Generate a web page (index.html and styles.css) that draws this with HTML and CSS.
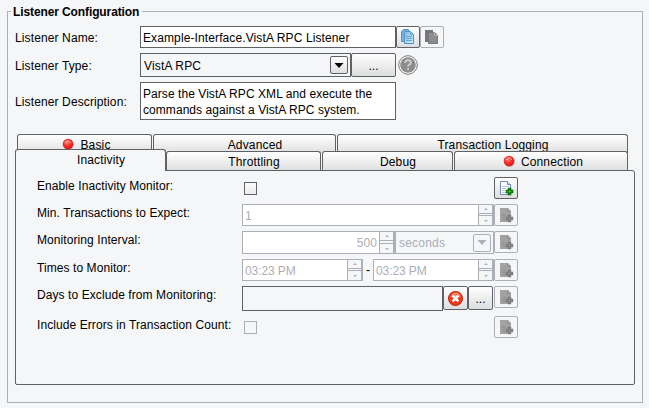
FILE: index.html
```
<!DOCTYPE html>
<html lang="en">
<head>
    <meta charset="UTF-8">
    <title>Listener Configuration</title>
    <link rel="stylesheet" href="styles.css">
</head>
<body>
    <!-- Shared icons -->
    <svg class="defs" width="0" height="0">
        <defs>
            <linearGradient id="blue" x1="0" y1="0" x2="1" y2="1">
                <stop offset="0" stop-color="#7db9e4"/>
                <stop offset="1" stop-color="#d5ecfb"/>
            </linearGradient>
            <radialGradient id="red" cx=".4" cy=".35" r=".65">
                <stop offset="0" stop-color="#ff8a80"/>
                <stop offset=".5" stop-color="#f8332c"/>
                <stop offset="1" stop-color="#d81a1a"/>
            </radialGradient>
        </defs>
        <symbol id="dot" viewBox="0 0 12 12">
            <circle cx="6.6" cy="6.8" r="5.2" fill="#b9bcbe"/>
            <circle cx="6" cy="6" r="5.3" fill="url(#red)"/>
            <path d="M3 5Q6 1 9 5" fill="none" stroke="#ffb0a8"/>
        </symbol>
        <symbol id="page-add" viewBox="0 0 16 16">
            <path d="M2.5 1.5h7l3 3v10h-10z" fill="#fff" stroke="#7186bd"/>
            <path d="M9.5 1.5v3h3" fill="#dce6f5" stroke="#7186bd"/>
            <path d="M4 6.5h7M4 8.5h4M4 10.5h3M4 12.5h4" stroke="#b8c6e0"/>
            <path d="M10.500 8.500h2v2h2v2h-2v2h-2v-2h-2v-2h2z" fill="#5cf03a" stroke="#0c7608" stroke-width="1.6"/>
        </symbol>
        <symbol id="page-add-off" viewBox="0 0 16 16">
            <path d="M2 1h8l3 3v11h-11z" fill="#a2a2a2"/>
            <path d="M9.5 1.5v3h3M4 8.5h4M4 10.5h3M4 12.5h4" fill="none" stroke="#909090"/>
            <path d="M10.5 8.5h2v2h2v2h-2v2h-2v-2h-2v-2h2z" fill="#939393" stroke="#7c7c7c" stroke-width="1.4"/>
        </symbol>
    </svg>

    <fieldset class="config">
        <legend>Listener Configuration</legend>

        <div class="field name-row">
            <span class="label">Listener Name:</span>
            <div class="box name-input">Example-Interface.VistA RPC Listener</div>
            <div class="btn icon-btn">
                <svg width="16" height="16" viewBox="0 0 16 16">
                    <path d="M1.5 2.5l2-2h5v12h-7z" fill="#77b2df" stroke="#5193c8"/>
                    <path d="M4.5 2.5h6l3 3v9h-9z" fill="url(#blue)" stroke="#5193c8"/>
                    <path d="M10.5 2.5v3h3M6 7.5h6M6 9.5h6M6 11.500h6" fill="none" stroke="#67a5d3"/>
                </svg>
            </div>
            <div class="btn icon-btn off">
                <svg width="16" height="16" viewBox="0 0 16 16">
                    <path d="M1 1h8v12h-8z" fill="#777"/>
                    <path d="M4.5 3.5h6l3 3v8h-9z" fill="#8d8d8d" stroke="#777"/>
                    <path d="M10.5 3.5v3h3" fill="none" stroke="#bbb"/>
                </svg>
            </div>
        </div>

        <div class="field type-row">
            <span class="label">Listener Type:</span>
            <div class="box combo type-combo">
                <span>VistA RPC</span>
                <div class="arrow"><svg width="10" height="5"><path d="M0.5 0h9l-4.5 5z"/></svg></div>
            </div>
            <div class="btn more-btn">...</div>
            <svg class="help" width="20" height="20" viewBox="0 0 20 20">
                <circle cx="10" cy="10" r="9.3" fill="#fff" stroke="#777"/>
                <circle cx="10" cy="10" r="7.8" fill="#8c8c8c"/>
                <path d="M7.2 8Q7.2 5.3 10 5.3T12.8 7.7Q12.8 9 11.2 9.7Q10.1 10.3 10.1 11.8M10.1 13v2" fill="none" stroke="#ccc" stroke-width="1.9"/>
            </svg>
        </div>

        <div class="field desc-row">
            <span class="label">Listener Description:</span>
            <div class="box desc-input">Parse the VistA RPC XML and execute the<br>commands against a VistA RPC system.</div>
        </div>

        <div class="tabs">
            <div class="tab-row back">
                <div class="tab basic marked"><svg class="dot" width="12" height="12"><use href="#dot"/></svg>Basic</div>
                <div class="tab advanced">Advanced</div>
                <div class="tab logging">Transaction Logging</div>
            </div>
            <div class="tab-row front">
                <div class="tab inactivity active">Inactivity</div>
                <div class="tab throttling">Throttling</div>
                <div class="tab debug">Debug</div>
                <div class="tab connection marked"><svg class="dot" width="12" height="12"><use href="#dot"/></svg>Connection</div>
            </div>
        </div>

        <div class="panel">
            <div class="row">
                <span class="label">Enable Inactivity Monitor:</span>
                <div class="controls"><div class="check"></div></div>
                <div class="btn icon-btn"><svg width="16" height="16"><use href="#page-add"/></svg></div>
            </div>
            <div class="row">
                <span class="label">Min. Transactions to Expect:</span>
                <div class="controls">
                    <div class="spinner wide"><span>1</span><div class="steps"><i class="up"></i><i class="down"></i></div></div>
                </div>
                <div class="btn icon-btn off"><svg width="16" height="16"><use href="#page-add-off"/></svg></div>
            </div>
            <div class="row interval">
                <span class="label">Monitoring Interval:</span>
                <div class="controls">
                    <div class="spinner number"><span>500</span><div class="steps"><i class="up"></i><i class="down"></i></div></div>
                    <div class="combo unit-combo">
                        <span>seconds</span>
                        <div class="arrow"><svg width="10" height="5"><path d="M0.5 0h9l-4.5 5z"/></svg></div>
                    </div>
                </div>
                <div class="btn icon-btn off"><svg width="16" height="16"><use href="#page-add-off"/></svg></div>
            </div>
            <div class="row">
                <span class="label">Times to Monitor:</span>
                <div class="controls">
                    <div class="spinner time"><span>03:23 PM</span><div class="steps"><i class="up"></i><i class="down"></i></div></div>
                    <span class="dash">-</span>
                    <div class="spinner time"><span>03:23 PM</span><div class="steps"><i class="up"></i><i class="down"></i></div></div>
                </div>
                <div class="btn icon-btn off"><svg width="16" height="16"><use href="#page-add-off"/></svg></div>
            </div>
            <div class="row days">
                <span class="label">Days to Exclude from Monitoring:</span>
                <div class="controls">
                    <div class="box days-input"></div>
                    <div class="btn day-btn">
                        <svg width="15" height="15" viewBox="0 0 14 14">
                            <circle cx="7" cy="7" r="6.5" fill="#ee3a1c" stroke="#c92a12"/>
                            <path d="M2 6Q3 2 7 1.5T12 6Q7 3.5 2 6z" fill="#f9826b"/>
                            <path d="M4.3 4.3l5.4 5.4M9.7 4.3l-5.4 5.4" stroke="#fff" stroke-width="2.4"/>
                        </svg>
                    </div>
                    <div class="btn day-btn dots">...</div>
                </div>
                <div class="btn icon-btn off"><svg width="16" height="16"><use href="#page-add-off"/></svg></div>
            </div>
            <div class="row">
                <span class="label">Include Errors in Transaction Count:</span>
                <div class="controls"><div class="check off"></div></div>
                <div class="btn icon-btn off"><svg width="16" height="16"><use href="#page-add-off"/></svg></div>
            </div>
        </div>
    </fieldset>
</body>
</html>
```

FILE: styles.css
```
* {
    box-sizing: border-box;
}

body {
    margin: 0;
    height: 408px;
    overflow: hidden;
    background-color: #f4f6f8;
    font-family: "Liberation Sans", Arial, sans-serif;
    font-size: 12px;
    line-height: 16px;
    letter-spacing: 0.08px;
    color: #000;
}

.defs {
    position: absolute;
}

svg {
    flex: none;
}

.config {
    width: 636px;
    height: 400px;
    margin: 3px 0 0 7px;
    padding: 0 7px;
    border: 1px solid #acaeb8;
}

.config legend {
    margin-left: -4px;
    padding: 1px 3px 0 2px;
    font-weight: bold;
    letter-spacing: -0.11px;
}

/* Top form */
.field {
    display: flex;
    align-items: center;
}

.field .label {
    width: 125px;
    flex: none;
    padding-top: 2px;
    letter-spacing: 0.12px;
}

.name-row {
    height: 22px;
    margin-top: 6px;
}

.type-row {
    height: 24px;
    margin-top: 5px;
}

.desc-row {
    height: 38px;
    margin-top: 5px;
}

.box {
    border: 1px solid #5f6165;
    background-color: #fff;
}

.name-input {
    width: 256px;
    height: 22px;
    padding: 3px 2px;
    letter-spacing: 0.11px;
}

.desc-input {
    width: 256px;
    height: 38px;
    padding: 3px 2px;
    letter-spacing: 0.06px;
}

.combo {
    display: flex;
    align-items: center;
    justify-content: space-between;
    padding: 0 2px 0 3px;
    background-color: #f4f6f8;
}

.type-combo {
    width: 211px;
    height: 24px;
}

.type-combo span {
    padding-top: 1px;
    letter-spacing: 0.15px;
}

.arrow {
    display: flex;
    align-items: center;
    justify-content: center;
    width: 18px;
    height: 18px;
    border: 1px solid #5f6165;
    border-radius: 2px;
    background: linear-gradient(#fff, #dedede);
}

.btn {
    display: flex;
    align-items: center;
    justify-content: center;
    flex: none;
    border: 1px solid #5f6165;
    border-radius: 2px;
    background: linear-gradient(#fff, #dcdddd);
}

.icon-btn {
    width: 24px;
    height: 22px;
}

.btn.off {
    border-color: #acaeb8;
    background: #f4f6f8;
}

.more-btn {
    width: 45px;
    height: 24px;
    padding-top: 2px;
}

.help {
    margin-left: 2px;
}

/* Tabs */
.tabs {
    margin-top: 14px;
}

.tab-row {
    display: flex;
}

.back {
    height: 15px;
    padding-left: 2px;
}

.front {
    height: 21px;
    align-items: flex-end;
}

.tab {
    display: flex;
    justify-content: center;
    height: 19px;
    padding: 2px 0 0 21px;
    border: 1px solid #5f6165;
    border-bottom: 0;
    border-radius: 3px 3px 0 0;
    background: linear-gradient(#fff, #dfe0e0);
    letter-spacing: 0.15px;
}

.tab.marked {
    padding-left: 4px;
}

.back .tab {
    margin-right: 1px;
}

.dot {
    margin: 1px 6px 0 0;
}

.basic {
    width: 135px;
}

.advanced {
    width: 183px;
}

.logging {
    width: 291px;
}

.inactivity {
    width: 151px;
}

.throttling {
    width: 155px;
    margin-right: 1px;
}

.debug {
    width: 131px;
    margin-right: 1px;
}

.connection {
    width: 174px;
}

/* Covers the panel's top border */
.front .active {
    position: relative;
    height: 22px;
    margin-bottom: -1px;
    background: #f4f6f8;
}

.panel {
    width: 620px;
    height: 215px;
    padding: 6px 0 0 21px;
    border: 1px solid #5f6165;
    border-radius: 0 3px 2px 2px;
}

/* Rows of the Inactivity tab */
.row {
    display: flex;
    align-items: flex-start;
    height: 22px;
    margin-bottom: 5px;
}

.row .label {
    width: 205px;
    flex: none;
    margin-top: 1px;
}

.controls {
    display: flex;
    width: 252px;
}

.row.interval {
    margin-bottom: 6px;
}

.row.days {
    margin-bottom: 8px;
}

.check {
    width: 13px;
    height: 13px;
    margin: 5px 0 0 2px;
    border: 1px solid #5f6165;
    background: linear-gradient(#fbfbfb, #ececec);
}

.check.off {
    border-color: #acaeb8;
    background: #f4f6f8;
}

.spinner {
    display: flex;
    justify-content: space-between;
    height: 22px;
    border: 1px solid #acaeb8;
    background-color: #fff;
    color: #acaeb8;
}

.spinner span {
    padding: 3px 2px;
}

.wide {
    width: 252px;
}

.interval .spinner,
.unit-combo {
    height: 23px;
}

.number {
    width: 153px;
}

.number span {
    flex: 1;
    text-align: right;
}

.time {
    width: 121px;
}

.time span {
    letter-spacing: -0.1px;
}

.dash {
    width: 10px;
    padding-top: 3px;
    text-align: center;
}

.steps {
    display: flex;
    flex-direction: column;
    justify-content: space-between;
    width: 15px;
    border-left: 1px solid #acaeb8;
    border-right: 1px solid #acaeb8;
    background-color: #f4f6f8;
}

.up,
.down {
    display: flex;
    align-items: center;
    justify-content: center;
    height: 9px;
    border-bottom: 1px solid #acaeb8;
}

.down {
    height: 10px;
    border-top: 1px solid #acaeb8;
    border-bottom: 0;
}

.up::before,
.down::before {
    content: "";
    border: 2px solid transparent;
    border-top-width: 0;
    border-bottom: 2px solid #acaeb8;
}

.down::before {
    border-top: 2px solid #acaeb8;
    border-bottom-width: 0;
}

.unit-combo {
    width: 99px;
    border: 1px solid #acaeb8;
    color: #acaeb8;
}

.unit-combo span {
    letter-spacing: 0.2px;
}

.unit-combo .arrow {
    border-color: #acaeb8;
    background: #f4f6f8;
    fill: #acaeb8;
}

.days-input {
    width: 201px;
    height: 25px;
    background-color: #f4f6f8;
}

.day-btn {
    width: 25px;
    height: 24px;
}

.dots {
    padding-top: 2px;
}
```
